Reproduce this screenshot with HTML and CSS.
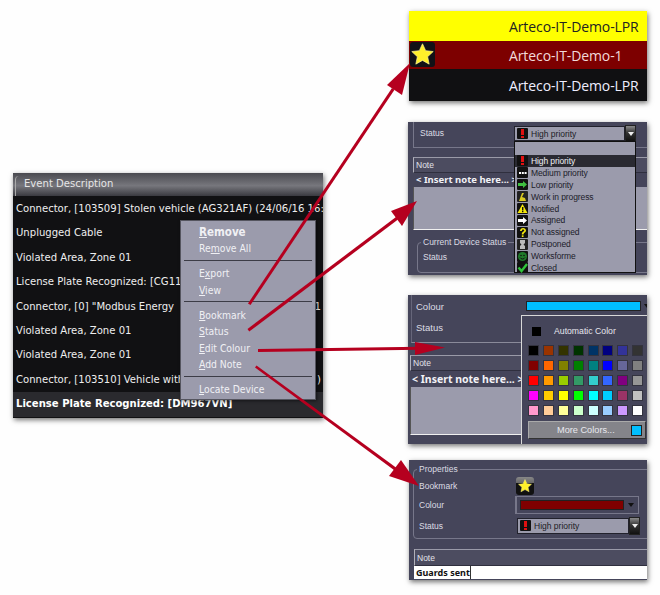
FILE: index.html
```html
<!DOCTYPE html>
<html lang="en">
<head>
<meta charset="utf-8">
<title>Event actions</title>
<link rel="stylesheet" href="styles.css">
</head>
<body>
<svg class="defs" width="0" height="0" aria-hidden="true">
  <symbol id="i-high" viewBox="0 0 11 11"><rect width="11" height="11" rx="1" fill="#111"/><rect x="4" y="1" width="3" height="6" fill="#e01010"/><rect x="4" y="8" width="3" height="2" fill="#e01010"/></symbol>
  <symbol id="i-med" viewBox="0 0 11 11"><rect width="11" height="11" rx="1" fill="#111"/><rect x="2" y="5" width="2" height="2" fill="#fff"/><rect x="4.8" y="5" width="2" height="2" fill="#fff"/><rect x="7.6" y="5" width="2" height="2" fill="#fff"/></symbol>
  <symbol id="i-low" viewBox="0 0 11 11"><rect width="11" height="11" rx="1" fill="#111"/><path d="M1 4h5V2l4 3.5L6 9V7H1z" fill="#3fc040"/></symbol>
  <symbol id="i-work" viewBox="0 0 11 11"><rect width="11" height="11" rx="1" fill="#222"/><path d="M2 10 5 2h2L5 6l3 1 1 3z" fill="#d8c820"/></symbol>
  <symbol id="i-note" viewBox="0 0 11 11"><rect width="11" height="11" rx="1" fill="#111"/><path d="M5.5 1 10.500 10H.5z" fill="#f4e80c"/><rect x="5" y="4" width="1.400" height="3.500" fill="#111"/><rect x="5" y="8" width="1.400" height="1.200" fill="#111"/></symbol>
  <symbol id="i-assign" viewBox="0 0 11 11"><rect width="11" height="11" rx="1" fill="#111"/><path d="M1 4h5V2l4 3.500L6 9V7H1z" fill="#fff"/></symbol>
  <symbol id="i-not" viewBox="0 0 11 11"><rect width="11" height="11" rx="1" fill="#111"/><path d="M3 4c0-4 6-4 6-.5 0 2-2.500 2-2.500 4H4.800c0-3 2.400-2.800 2.400-4 0-1.300-2.400-1.300-2.400.5z" fill="#f4e80c"/><rect x="4.800" y="8.300" width="1.700" height="1.700" fill="#f4e80c"/></symbol>
  <symbol id="i-post" viewBox="0 0 11 11"><rect width="11" height="11" rx="1" fill="#222"/><path d="M3 1h5v3L6.500 5.500 8 7v3H3V7l1.500-1.500L3 4z" fill="#bbb"/></symbol>
  <symbol id="i-works" viewBox="0 0 11 11"><rect width="11" height="11" rx="1" fill="#111"/><circle cx="5.500" cy="5.500" r="4.500" fill="#1f7a2a"/><circle cx="4" cy="4.500" r=".8" fill="#111"/><circle cx="7" cy="4.500" r=".8" fill="#111"/><path d="M3 6.500c1 2 4 2 5 0" fill="none" stroke="#111"/></symbol>
  <symbol id="i-closed" viewBox="0 0 11 11"><rect width="11" height="11" rx="1" fill="#111"/><path d="M1.500 5.500 4.500 9 10 2" fill="none" stroke="#2fc43a" stroke-width="2.400"/></symbol>
  <symbol id="i-star" viewBox="1.500 1.500 21 21"><path d="M12 2.200l2.900 6.300 6.900.8-5.100 4.700 1.400 6.800-6.100-3.400-6.100 3.400 1.400-6.800-5.100-4.700 6.900-.8z" fill="#fff02a" stroke="#fff8a0" stroke-width=".6" stroke-linejoin="round"/></symbol>
</svg>

<main class="canvas">

  <section class="panel events">
    <div class="ev-head"><span class="ev-tab">Event Description</span></div>
    <ul class="ev-list">
      <li>Connector, [103509] Stolen vehicle (AG321AF) (24/06/16 16:5</li>
      <li>Unplugged Cable</li>
      <li>Violated Area, Zone 01</li>
      <li>License Plate Recognized: [CG11</li>
      <li><span>Connector, [0] "Modbus Energy</span><span>1</span></li>
      <li>Violated Area, Zone 01</li>
      <li>Violated Area, Zone 01</li>
      <li><span>Connector, [103510] Vehicle with</span><span>)</span></li>
      <li class="ev-selected">License Plate Recognized: [DM967VN]</li>
    </ul>
    <div class="menu">
      <div class="menu-item menu-strong"><u>R</u>emove</div>
      <div class="menu-item">Re<u>m</u>ove All</div>
      <hr class="menu-sep">
      <div class="menu-item">E<u>x</u>port</div>
      <div class="menu-item"><u>V</u>iew</div>
      <hr class="menu-sep">
      <div class="menu-item"><u>B</u>ookmark</div>
      <div class="menu-item"><u>S</u>tatus</div>
      <div class="menu-item"><u>E</u>dit Colour</div>
      <div class="menu-item"><u>A</u>dd Note</div>
      <hr class="menu-sep">
      <div class="menu-item"><u>L</u>ocate Device</div>
    </div>
  </section>

  <section class="panel servers">
    <div class="srv srv-yellow">Arteco-IT-Demo-LPR</div>
    <div class="srv srv-red">
      <span class="srv-star"><svg class="srv-star-svg"><use href="#i-star"/></svg></span>
      Arteco-IT-Demo-1
    </div>
    <div class="srv srv-black">Arteco-IT-Demo-LPR</div>
  </section>

  <section class="panel dark status-panel">
    <div class="sp-group">
      <span class="lbl">Status</span>
      <div class="combo sp-combo">
        <svg class="ic"><use href="#i-high"/></svg><span>High priority</span>
        <span class="combo-btn"><i class="tri"></i></span>
      </div>
    </div>
    <div class="note-box sp-note">
      <div class="note-head">Note</div>
      <div class="note-hint">&lt; Insert note here... &gt;</div>
      <div class="note-body"></div>
    </div>
    <fieldset class="group sp-device">
      <legend>Current Device Status</legend>
      <span class="lbl">Status</span>
    </fieldset>
    <ul class="drop">
      <li class="drop-on"><svg class="ic"><use href="#i-high"/></svg>High priority</li>
      <li><svg class="ic"><use href="#i-med"/></svg>Medium priority</li>
      <li><svg class="ic"><use href="#i-low"/></svg>Low priority</li>
      <li><svg class="ic"><use href="#i-work"/></svg>Work in progress</li>
      <li><svg class="ic"><use href="#i-note"/></svg>Notified</li>
      <li><svg class="ic"><use href="#i-assign"/></svg>Assigned</li>
      <li><svg class="ic"><use href="#i-not"/></svg>Not assigned</li>
      <li><svg class="ic"><use href="#i-post"/></svg>Postponed</li>
      <li><svg class="ic"><use href="#i-works"/></svg>Worksforme</li>
      <li><svg class="ic"><use href="#i-closed"/></svg>Closed</li>
    </ul>
  </section>

  <section class="panel dark colour-panel">
    <div class="cp-group">
      <div class="cp-row"><span class="lbl lbl-lg">Colour</span><span class="cp-bar"></span><i class="tri cp-tri"></i></div>
      <div class="cp-row cp-row2"><span class="lbl lbl-lg">Status</span></div>
    </div>
    <div class="note-box cp-note">
      <div class="note-head">Note</div>
      <div class="note-hint">&lt; Insert note here... &gt;</div>
      <div class="note-body"></div>
    </div>
    <div class="palette">
      <div class="auto"><span class="auto-sw"></span><span>Automatic Color</span></div>
      <div class="swatches">
        <i class="c00"></i><i class="c01"></i><i class="c02"></i><i class="c03"></i><i class="c04"></i><i class="c05"></i><i class="c06"></i><i class="c07"></i>
        <i class="c10"></i><i class="c11"></i><i class="c12"></i><i class="c13"></i><i class="c14"></i><i class="c15"></i><i class="c16"></i><i class="c17"></i>
        <i class="c20"></i><i class="c21"></i><i class="c22"></i><i class="c23"></i><i class="c24"></i><i class="c25"></i><i class="c26"></i><i class="c27"></i>
        <i class="c30"></i><i class="c31"></i><i class="c32"></i><i class="c33"></i><i class="c34"></i><i class="c35"></i><i class="c36"></i><i class="c37"></i>
        <i class="c40"></i><i class="c41"></i><i class="c42"></i><i class="c43"></i><i class="c44"></i><i class="c45"></i><i class="c46"></i><i class="c47"></i>
      </div>
      <div class="more"><span>More Colors...</span><span class="more-sw"></span></div>
    </div>
  </section>

  <section class="panel dark props-panel">
    <fieldset class="group pp-group">
      <legend>Properties</legend>
      <div class="pp-row pp-row1"><span class="lbl pp-lbl">Bookmark</span>
        <span class="pp-star"><svg class="pp-star-svg"><use href="#i-star"/></svg></span></div>
      <div class="pp-row pp-row2"><span class="lbl pp-lbl">Colour</span>
        <span class="pp-colour"><span class="pp-red"></span><i class="tri"></i></span></div>
      <div class="pp-row pp-row3"><span class="lbl pp-lbl">Status</span>
        <div class="combo pp-combo"><svg class="ic"><use href="#i-high"/></svg><span>High priority</span>
          <span class="combo-btn"><i class="tri"></i></span></div></div>
    </fieldset>
    <div class="pp-note">
      <div class="note-head">Note</div>
      <div class="pp-input"><span class="pp-text">Guards sent</span></div>
    </div>
  </section>

  <svg class="arrows" viewBox="0 0 660 595" aria-hidden="true">
    <g fill="#b5001f" stroke="none">
      <path d="M248 303.500 392 88l2.500 1.800L250.500 305z"/>
      <path d="M410 63 402 95 387 85z"/>
      <path d="M247.500 329 396 217l2 2.600L249.200 331.500z"/>
      <path d="M417 201 402 226 391 211z"/>
      <path d="M258 349 420 346.800v3L258 352z"/>
      <path d="M445 347.500 415 355V342z"/>
      <path d="M256.500 365.400 398 469l-2 2.600L255 367.600z"/>
      <path d="M419 486 389 476 401 460z"/>
    </g>
  </svg>
</main>
</body>
</html>
```
FILE: styles.css
```css
* { box-sizing: border-box; }
html, body { margin: 0; padding: 0; background: #fefefe; }
body { font-family: "Liberation Sans", sans-serif; }
.defs { position: absolute; }
.canvas { position: relative; width: 660px; height: 595px; overflow: hidden; }
.panel { position: absolute; overflow: hidden; box-shadow: 1px 2px 5px rgba(0,0,0,.55); }
ul { list-style: none; margin: 0; padding: 0; }
.arrows { position: absolute; left: 0; top: 0; width: 660px; height: 595px; pointer-events: none; }

/* event list */
.events { left: 13px; top: 173px; width: 310px; height: 245px; background: #111113; color: #eee; font-family: "DejaVu Sans", sans-serif; font-stretch: condensed; font-size: 11.200px; }
.ev-head { height: 23px; background: linear-gradient(#4a4a50, #77777d 55%, #3a3a40); padding: 3px 0 0 2px; }
.ev-tab { display: block; height: 20px; padding-left: 8px; border-left: 1px solid #aaa; border-top-left-radius: 4px; color: #e6e6e6; line-height: 16px; }
.ev-list { padding: 1px 0 0 3px; }
.ev-list li { display: flex; justify-content: space-between; height: 24.400px; line-height: 24px; padding-right: 2px; white-space: nowrap; }
.ev-list .ev-selected { display: block; background: #2a2a2e; font-weight: 700; color: #fff; margin-left: -3px; padding-left: 3px; }
.menu { position: absolute; left: 167px; top: 47px; width: 136px; height: 180px; background: #9b9bac; color: #f0f0f4; border: 1px solid #55555f; padding: 3px 3px 0; font-size: 10.300px; box-shadow: 1px 1px 3px rgba(0,0,0,.5); }
.menu-item { height: 16.400px; line-height: 16px; padding-left: 15px; }
.menu-strong { font-weight: 700; font-size: 11.500px; }
.menu-sep { height: 1px; margin: 3px 0 4.700px; border: 0; background: #3c3c46; }

/* server list */
.servers { left: 409px; top: 11px; width: 238px; height: 90px; font-family: "Open Sans", "Liberation Sans", sans-serif; font-size: 14px; font-weight: 500; letter-spacing: -.1px; display: flex; flex-direction: column; }
.srv { display: flex; align-items: center; padding-left: 100px; position: relative; }
.srv-yellow { height: 30px; background: #ffff00; color: #222; }
.srv-red { height: 28px; background: #7d0000; color: #f2dada; }
.srv-black { height: 32px; background: #101012; color: #eef; }
.srv-star { position: absolute; left: 1px; top: 1px; width: 25px; height: 25px; background: #111116; border-radius: 3px; display: flex; align-items: center; justify-content: center; }
.srv-star-svg { width: 23px; height: 23px; }

/* shared dark pieces */
.dark { background: #45455a; color: #e2e2ea; font-size: 8.500px; }
.lbl { color: #dcdce4; }
.lbl-lg { font-size: 9.500px; }
.ic { width: 11px; height: 11px; flex: none; }
.tri { display: inline-block; width: 0; height: 0; border: 3px solid transparent; border-top: 4px solid #111; border-bottom: 0; }
.combo { display: flex; align-items: center; gap: 3px; background: #9b9bac; color: #1c1c26; border: 1px solid #22222c; position: relative; padding-left: 2px; }
.combo-btn { position: absolute; right: -12px; top: -2px; width: 11px; height: 17px; display: flex; align-items: center; justify-content: center; background: linear-gradient(#8a8a8a, #333 45%, #111); border: 1px solid #222; }
.combo-btn .tri { border-top-color: #eee; }
.note-box { background: #45455a; }
.note-head { height: 16px; line-height: 15px; padding-left: 2px; border-top: 1px solid #9a9aa8; border-left: 1px solid #b0b0ba; border-bottom: 1px solid #2f2f3e; background: #4c4c60; color: #e2e2ea; }
.note-hint { height: 14px; line-height: 13px; font-family: "Noto Sans", sans-serif; font-weight: 700; color: #f2f2f6; padding-left: 3px; white-space: nowrap; font-size: 9.500px; }
.note-body { background: #9b9bac; border-left: 1px solid #555; border-bottom: 1px solid #f0f0f0; }
.group { margin: 0; padding: 0; border: 1px solid #77778a; border-radius: 4px; }
.group legend { padding: 0 2px; margin-left: 3px; font-size: 8.500px; line-height: 9px; color: #dcdce4; }

/* status panel */
.status-panel { left: 408px; top: 122px; width: 239px; height: 153px; }
.sp-group { height: 26px; margin-left: 5px; border-left: 1px solid #77778a; border-bottom: 1px solid #77778a; padding: 6px 0 0 6px; position: relative; }
.sp-combo { position: absolute; left: 100px; top: 4px; width: 111px; height: 15px; }
.sp-note { margin: 9px 0 0 5px; }
.sp-note .note-body { height: 43px; }
.sp-device { position: absolute; left: 9px; top: 116px; width: 240px; height: 35px; padding: 5px 0 0 0; }
.sp-device .lbl { margin-left: 5px; }
.drop { position: absolute; left: 106px; top: 19px; width: 122px; height: 132px; background: #9b9bac; border: 1px solid #111; padding-top: 13px; color: #20202a; letter-spacing: -.1px; }
.drop li { display: flex; align-items: center; gap: 3px; height: 11.900px; padding-left: 2px; white-space: nowrap; }
.drop .drop-on { background: #2a2a32; color: #f0f0f4; }

/* colour panel */
.colour-panel { left: 408px; top: 295px; width: 239px; height: 149px; }
.cp-group { height: 48px; width: 113px; margin-left: 3px; border-left: 1px solid #66667a; border-bottom: 1px solid #8a8a9a; padding: 4px 0 0 4px; }
.cp-row { height: 15px; display: flex; align-items: center; }
.cp-row2 { margin-top: 6px; }
.cp-bar { position: absolute; left: 118px; top: 6px; width: 115px; height: 10px; background: #00bfff; border: 1px solid #222; }
.cp-tri { position: absolute; left: 236px; top: 9px; }
.cp-note { margin: 12px 0 0 2px; width: 112px; }
.cp-note .note-hint { height: 16px; line-height: 16px; font-size: 10.500px; padding-left: 2px; }
.cp-note .note-body { height: 48px; }
.palette { position: absolute; left: 113px; top: 20px; width: 126px; height: 129px; background: #45455a; border-left: 1px solid #d8d8d8; border-top: 1px solid #d8d8d8; padding: 8px 0 0 7px; }
.auto { display: flex; align-items: center; gap: 13px; height: 14px; margin-left: 3px; color: #e6e6ee; font-size: 8.700px; }
.auto-sw { width: 9px; height: 9px; background: #000; flex: none; }
.swatches { display: grid; grid-template-columns: repeat(8, 9px); grid-template-rows: repeat(5, 9px); column-gap: 5.900px; row-gap: 6px; margin: 8px 0 0 0; }
.swatches i { display: block; outline: 1px solid #33333f; }
.more { display: flex; justify-content: space-between; align-items: center; width: 118px; height: 18px; margin: 6px 0 0 -1px; padding: 0 4px 0 28px; background: #84848a; border: 1px solid #aaa; border-right-color: #333; border-bottom-color: #333; color: #e8e8ee; font-size: 9.200px; }
.more-sw { width: 9px; height: 9px; background: #00bfff; outline: 1px solid #222; }
.c00{background:#000}.c01{background:#930}.c02{background:#330}.c03{background:#030}.c04{background:#036}.c05{background:#000080}.c06{background:#339}.c07{background:#333}
.c10{background:#800000}.c11{background:#f60}.c12{background:#808000}.c13{background:#008000}.c14{background:#008080}.c15{background:#00f}.c16{background:#669}.c17{background:#808080}
.c20{background:#f00}.c21{background:#f90}.c22{background:#9c0}.c23{background:#396}.c24{background:#3cc}.c25{background:#36f}.c26{background:#800080}.c27{background:#969696}
.c30{background:#f0f}.c31{background:#fc0}.c32{background:#ff0}.c33{background:#0f0}.c34{background:#0ff}.c35{background:#0cf}.c36{background:#936}.c37{background:#c0c0c0}
.c40{background:#f9c}.c41{background:#fc9}.c42{background:#ff9}.c43{background:#cfc}.c44{background:#cff}.c45{background:#9cf}.c46{background:#c9f}.c47{background:#fff}

/* properties panel */
.props-panel { left: 409px; top: 460px; width: 238px; height: 120px; }
.pp-group { width: 240px; height: 74px; margin: 5px 0 0 4px; padding: 0; position: relative; }
.pp-row { display: flex; align-items: center; padding-left: 5px; }
.pp-lbl { width: 97px; flex: none; }
.pp-row1 { height: 18px; margin-top: 3px; }
.pp-row2 { height: 18px; margin-top: 1px; }
.pp-row3 { height: 17px; margin-top: 3px; }
.pp-star { width: 18px; height: 18px; background: linear-gradient(#888 0, #666 35%, #111 36%); border-radius: 3px; display: flex; align-items: center; justify-content: center; }
.pp-star-svg { width: 14px; height: 14px; }
.pp-colour { width: 124px; height: 18px; margin-left: -1px; border: 1px solid #77778a; border-left-width: 2px; display: flex; align-items: center; gap: 4px; padding-left: 3px; }
.pp-red { width: 104px; height: 10px; background: #800000; border: 1px solid #222; }
.pp-combo { width: 112px; height: 16px; margin-left: 1px; }
.pp-combo .combo-btn { top: -2px; height: 18px; }
.pp-note { margin: 10px 0 0 5px; }
.pp-note .note-head { height: 17px; line-height: 17px; }
.pp-input { height: 13px; line-height: 13px; background: #fff; color: #111; font-family: "Noto Sans", sans-serif; font-weight: 700; font-size: 9px; padding-left: 2px; }
.pp-text { border-right: 1px solid #333; }
```
